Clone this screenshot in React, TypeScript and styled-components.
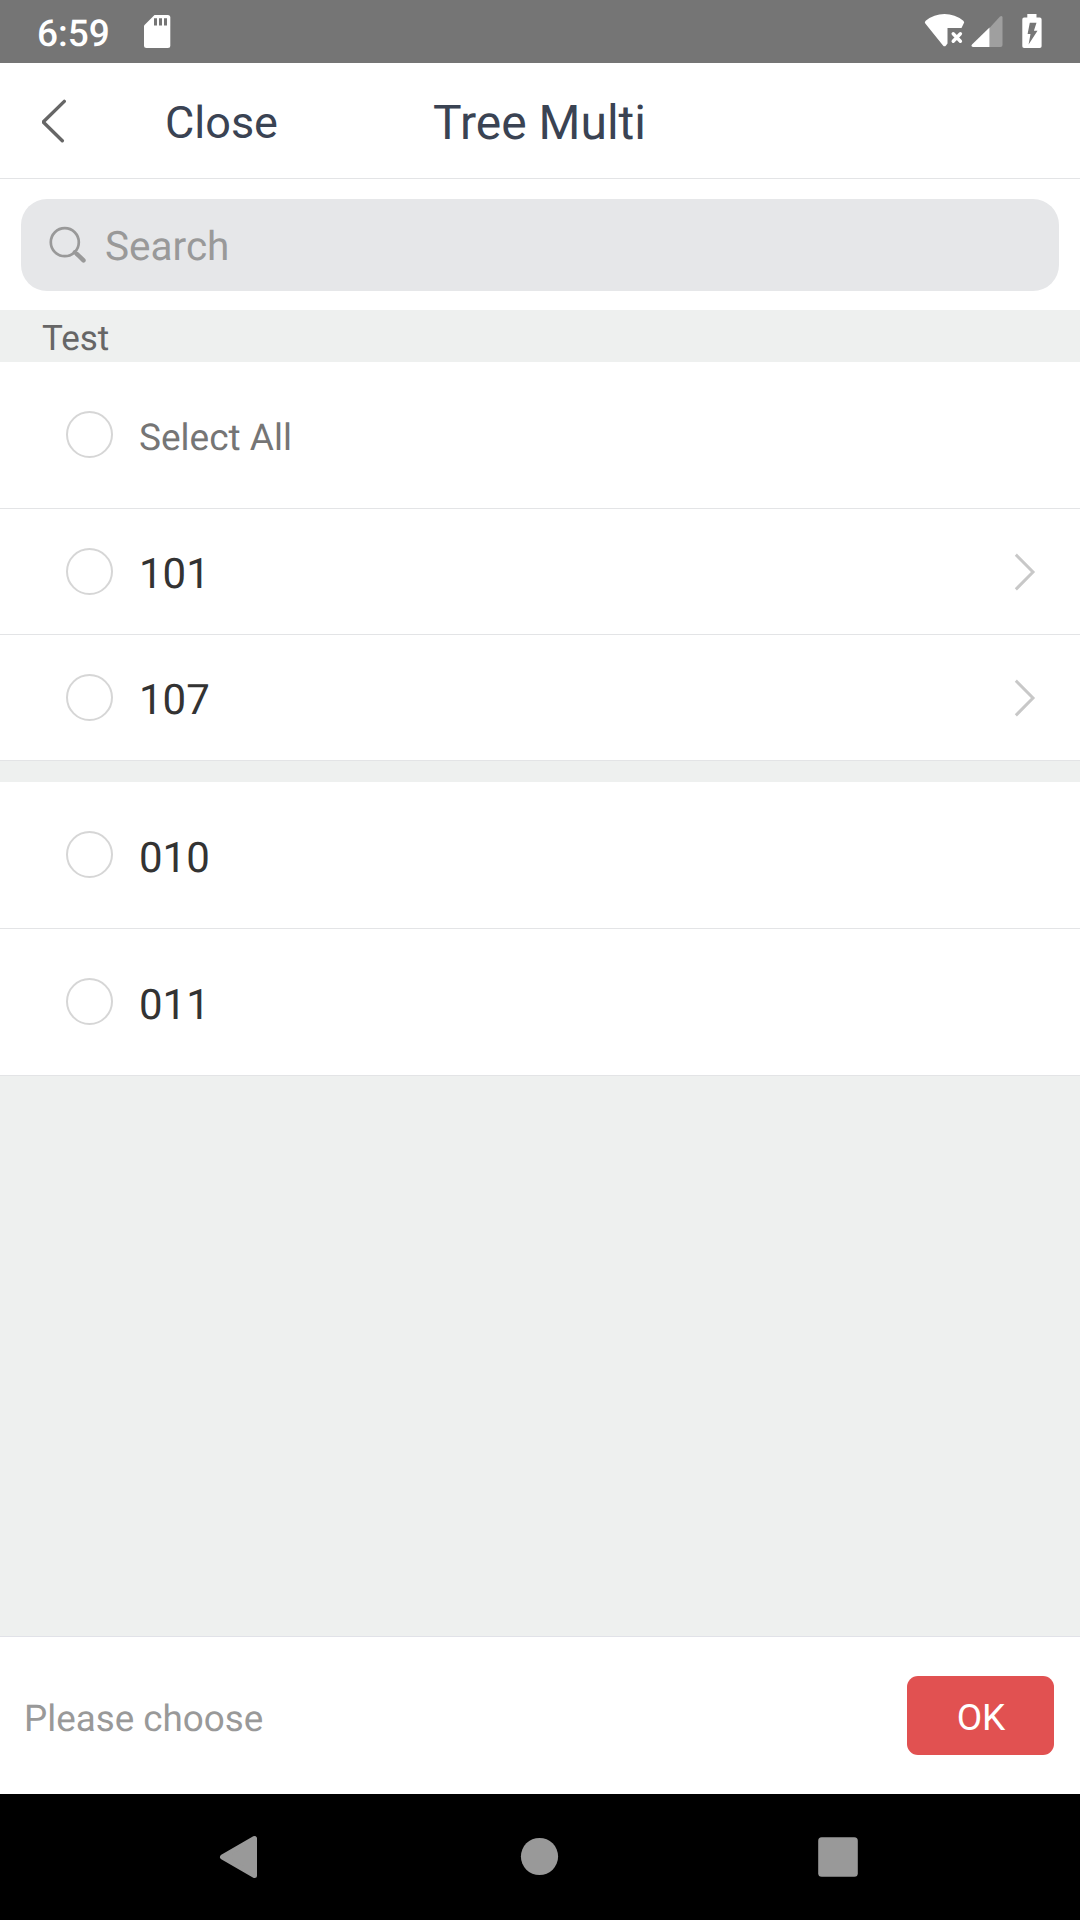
import React, { useState } from "react";
import styled, { createGlobalStyle } from "styled-components";

const GlobalStyle = createGlobalStyle`
  *, *::before, *::after { box-sizing: border-box; }
  body { margin: 0; background: #eef0ef; }
  button { border: 0; padding: 0; background: none; font: inherit; color: inherit; }
  svg { display: block; flex: none; }
`;

const Screen = styled.div`
  display: flex;
  flex-direction: column;
  width: 1080px;
  height: 1920px;
  overflow: hidden;
  background: #eef0ef;
  font-family: Roboto, "Liberation Sans", sans-serif;
  text-rendering: geometricPrecision;
  white-space: nowrap;
`;

const StatusBar = styled.div`
  display: flex;
  flex: none;
  align-items: flex-start;
  justify-content: space-between;
  height: 63px;
  padding: 14px 38px 0 37px;
  background: #757575;
  color: #fff;
`;

const StatusGroup = styled.div<{ $gap: number }>`
  display: flex;
  gap: ${(p) => p.$gap}px;
`;

const Clock = styled.span`
  width: 72px;
  padding-top: 2px;
  font-size: 37px;
  font-weight: 500;
  line-height: 37px;
`;

const Header = styled.header`
  display: grid;
  flex: none;
  grid-template-columns: 165px 268px 1fr;
  align-items: center;
  height: 116px;
  border-bottom: 1px solid #e3e4e6;
  background: #fff;
  color: #3a4353;
`;

const BackButton = styled.button`
  padding-left: 41px;
`;

const CloseButton = styled.button`
  padding-top: 4px;
  text-align: left;
  font-size: 45px;
  line-height: 54px;
`;

const Title = styled.h1`
  margin: 0;
  padding-top: 4px;
  font-size: 48px;
  font-weight: 400;
  line-height: 56px;
`;

const SearchArea = styled.div`
  flex: none;
  height: 131px;
  padding: 20px 21px 0;
  background: #fff;
`;

const SearchBox = styled.div`
  display: flex;
  align-items: center;
  gap: 19px;
  height: 92px;
  padding: 0 28px 2px;
  border-radius: 26px;
  background: #e6e7e9;
  color: #999;
  font-size: 40.5px;
`;

const SearchHint = styled.span`
  padding-top: 4px;
`;

const SectionTitle = styled.div`
  flex: none;
  height: 52px;
  padding: 2px 0 0 42px;
  color: #666;
  font-size: 35px;
  line-height: 54px;
`;

const Group = styled.div`
  flex: none;
  background: #fff;

  & + & { margin-top: 21px; }
`;

const Row = styled.div<{ $tall?: boolean }>`
  display: flex;
  align-items: center;
  height: ${(p) => (p.$tall ? 147 : 126)}px;
  padding: 0 44px ${(p) => (p.$tall ? 1 : 0)}px 66px;
  border-bottom: 1px solid #e3e4e6;
`;

const Radio = styled.button<{ $on: boolean }>`
  width: 47px;
  height: 47px;
  border: 2px solid #d6d6d6;
  border-radius: 50%;
  background: ${(p) => (p.$on ? "#e15151" : "#fff")};
`;

const RowLabel = styled.span<{ $muted?: boolean; $drop: number }>`
  flex: 1;
  padding: ${(p) => p.$drop}px 0 0 26px;
  color: ${(p) => (p.$muted ? "#757575" : "#333")};
  font-size: ${(p) => (p.$muted ? 37 : 42)}px;
`;

const Footer = styled.footer`
  display: flex;
  flex: none;
  align-items: center;
  justify-content: space-between;
  height: 158px;
  margin-top: auto;
  padding: 0 26px 0 24px;
  border-top: 1px solid #e1e2e8;
  background: #fff;
`;

const Hint = styled.span`
  padding-top: 6px;
  color: #999;
  font-size: 36.8px;
`;

const OkButton = styled.button`
  width: 147px;
  height: 79px;
  padding: 4px 0 0 1px;
  border-radius: 11px;
  background: #e15151;
  color: #fff;
  font-size: 37px;
`;

const NavBar = styled.nav`
  display: grid;
  flex: none;
  grid-template-columns: repeat(3, 300px);
  place-content: center;
  justify-items: center;
  height: 126px;
  background: #000;
`;

const SdCardIcon = () => (
  <svg width="28" height="35" viewBox="143 14 28 35">
    <path fill="#fff" d="M154.5 15H167.8Q170.3 15 170.3 17.5V45.5Q170.3 48 167.8 48H146.500Q144 48 144 45.500V25.500Z" />
    <path fill="#757575" d="M154 18.300h3v7.200h-3zM159 18.300h3v7.200h-3zM164 18.300h3v7.200h-3z" />
  </svg>
);

const WifiIcon = () => (
  <svg width="41" height="34" viewBox="924 14 41 34">
    <path fill="#fff" d="M925.300 23.600Q924.100 22 925.700 20.700Q934 14 944.500 14Q955 14 963.300 20.700Q964.900 22 963.700 23.600L961.500 28H947.500V43.500L946 45.500Q944.500 47.200 943 45.500Z" />
    <path stroke="#fff" strokeWidth="3.400" strokeLinecap="round" d="M953.200 33.800L960.400 41.200M960.400 33.800L953.200 41.200" />
  </svg>
);

const SignalIcon = () => (
  <svg width="32" height="34" viewBox="970.500 14 32 34">
    <path fill="#9f9f9f" d="M989 28L999.500 16.500Q1002 15 1002 17.500V45Q1002 47 1000 47H989Z" />
    <path fill="#fff" d="M989 27.500V47H972.500Q970 46.500 971.500 44.500Z" />
  </svg>
);

const BatteryIcon = () => (
  <svg width="20" height="35" viewBox="1021.700 14 20 35">
    <path fill="#fff" d="M1027 14h9.200v3.600h3.300q1.800 0 1.800 1.800v26.800q0 1.800-1.800 1.800h-15.700q-1.800 0-1.800-1.800v-26.800q0-1.800 1.800-1.800h3.200z" />
    <path fill="#757575" d="M1029.500 22.700h6.700l-2.600 8.100h3.600l-8.900 13.700 1.900-10.500h-2.900z" />
  </svg>
);

const BackIcon = () => (
  <svg width="26" height="44" viewBox="41 99 26 44" fill="none" stroke="#666" strokeWidth="3.400" strokeLinecap="round" strokeLinejoin="bevel">
    <path d="M64.300 101.400L43.200 122L62.300 140.700" />
  </svg>
);

const SearchIcon = () => (
  <svg width="37" height="37" viewBox="49 225.500 37 37" fill="none" stroke="#999" strokeLinecap="round">
    <circle cx="64.800" cy="241.700" r="14" strokeWidth="2.700" />
    <path strokeWidth="3.600" d="M74.500 251.500L77 254" />
    <path strokeWidth="4.400" d="M77 253.500L83.500 259.900" />
  </svg>
);

const ChevronIcon = () => (
  <svg width="22" height="38" viewBox="1014 553 22 38" fill="none" stroke="#c8c8c8" strokeWidth="3" strokeLinecap="square">
    <path d="M1016.900 555.700L1033 572L1016.900 588.300" />
  </svg>
);

interface Item {
  id: string;
  hasChildren?: boolean;
}

const branches: Item[] = [
  { id: "101", hasChildren: true },
  { id: "107", hasChildren: true },
];
const leaves: Item[] = [{ id: "010" }, { id: "011" }];
const allIds = [...branches, ...leaves].map((i) => i.id);

export default function App() {
  const [picked, setPicked] = useState<string[]>([]);
  const toggle = (id: string) =>
    setPicked((p) => (p.includes(id) ? p.filter((x) => x !== id) : [...p, id]));
  const everything = picked.length === allIds.length;

  const renderItem = (item: Item) => (
    <Row key={item.id} $tall={!item.hasChildren}>
      <Radio $on={picked.includes(item.id)} onClick={() => toggle(item.id)} />
      <RowLabel $drop={item.hasChildren ? 5 : 7}>{item.id}</RowLabel>
      {item.hasChildren && <ChevronIcon />}
    </Row>
  );

  return (
    <Screen>
      <GlobalStyle />
      <StatusBar>
        <StatusGroup $gap={34}>
          <Clock>6:59</Clock>
          <SdCardIcon />
        </StatusGroup>
        <StatusGroup $gap={6}>
          <WifiIcon />
          <StatusGroup $gap={19}>
            <SignalIcon />
            <BatteryIcon />
          </StatusGroup>
        </StatusGroup>
      </StatusBar>

      <Header>
        <BackButton><BackIcon /></BackButton>
        <CloseButton>Close</CloseButton>
        <Title>Tree Multi</Title>
      </Header>

      <SearchArea>
        <SearchBox>
          <SearchIcon />
          <SearchHint>Search</SearchHint>
        </SearchBox>
      </SearchArea>

      <SectionTitle>Test</SectionTitle>

      <Group>
        <Row $tall>
          <Radio $on={everything} onClick={() => setPicked(everything ? [] : allIds)} />
          <RowLabel $muted $drop={8}>Select All</RowLabel>
        </Row>
        {branches.map(renderItem)}
      </Group>
      <Group>{leaves.map(renderItem)}</Group>

      <Footer>
        <Hint>Please choose</Hint>
        <OkButton>OK</OkButton>
      </Footer>

      <NavBar>
        <svg width="60" height="60" viewBox="210 1827 60 60">
          <path fill="#999" stroke="#999" strokeWidth="5" strokeLinejoin="round" d="M222.500 1857L254.500 1838.500V1875.500Z" />
        </svg>
        <svg width="60" height="60" viewBox="510 1827 60 60">
          <circle fill="#999" cx="539.500" cy="1856.500" r="18.600" />
        </svg>
        <svg width="60" height="60" viewBox="810 1827 60 60">
          <rect fill="#999" x="818.200" y="1837.200" width="39.600" height="39.600" rx="3.500" />
        </svg>
      </NavBar>
    </Screen>
  );
}
